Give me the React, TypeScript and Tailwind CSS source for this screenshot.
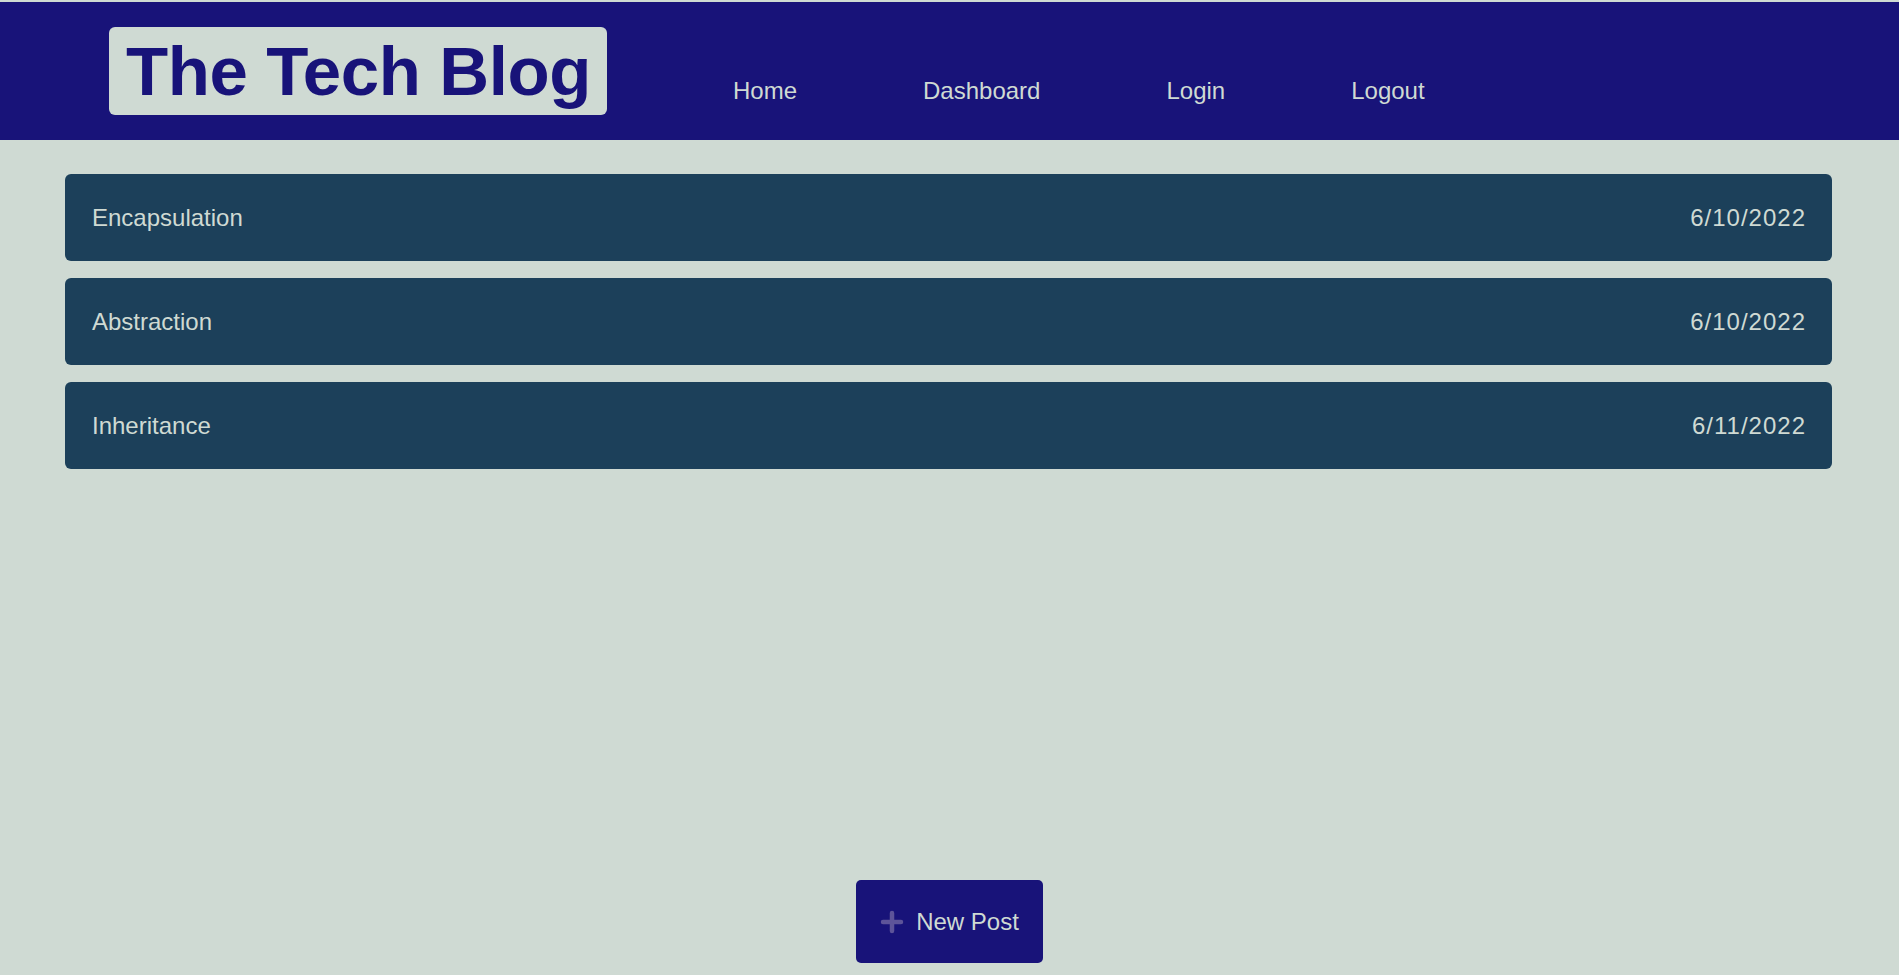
import React from 'react';

const posts = [
  { id: 1, title: 'Encapsulation', date: '6/10/2022' },
  { id: 2, title: 'Abstraction', date: '6/10/2022' },
  { id: 3, title: 'Inheritance', date: '6/11/2022' },
];

const navLinks = ['Home', 'Dashboard', 'Login', 'Logout'];

const PlusIcon = () => (
  <svg width="24" height="24" viewBox="0 0 24 24" className="shrink-0">
    <path d="M12 3v18M3 12h18" stroke="#5d5499" strokeWidth="4.5" strokeLinecap="round" />
  </svg>
);

export default function App() {
  return (
    <div
      className="min-h-screen flex flex-col bg-[#cfdad3] pt-[2px] text-[#cfdad3]"
      style={{ fontFamily: '"Liberation Sans", Arial, sans-serif' }}
    >
      <header className="h-[138px] bg-[#181379] flex items-start pl-[109px] gap-[126px]">
        <div className="mt-[25px] h-[88px] w-[498px] bg-[#cfdad3] rounded-[6px] pl-[17px] flex items-center">
          <h1 className="text-[69px] font-bold leading-none text-[#181379] tracking-[-0.4px] whitespace-nowrap">The Tech Blog</h1>
        </div>
        <nav className="flex gap-[126px] mt-[75px]">
          {navLinks.map((link) => (
            <a key={link} href="#" className="text-[24px] leading-[28px] text-[#cfdad3]">
              {link}
            </a>
          ))}
        </nav>
      </header>

      <main className="flex-1 flex flex-col gap-[17px] pl-[65px] pr-[67px] pt-[34px]">
        {posts.map((post) => (
          <div
            key={post.id}
            className="h-[87px] bg-[#1c405a] rounded-[6px] flex items-center justify-between pl-[27px] pr-[26px]"
          >
            <span className="text-[24px]">{post.title}</span>
            <span className="text-[24px] tracking-[1px]">{post.date}</span>
          </div>
        ))}
      </main>

      <footer className="flex justify-center pb-[12px]">
        <button className="h-[83px] w-[187px] bg-[#181379] rounded-[5px] flex items-center justify-center gap-[12px] text-[24px] text-[#cfdad3]">
          <PlusIcon />
          <span>New Post</span>
        </button>
      </footer>
    </div>
  );
}
